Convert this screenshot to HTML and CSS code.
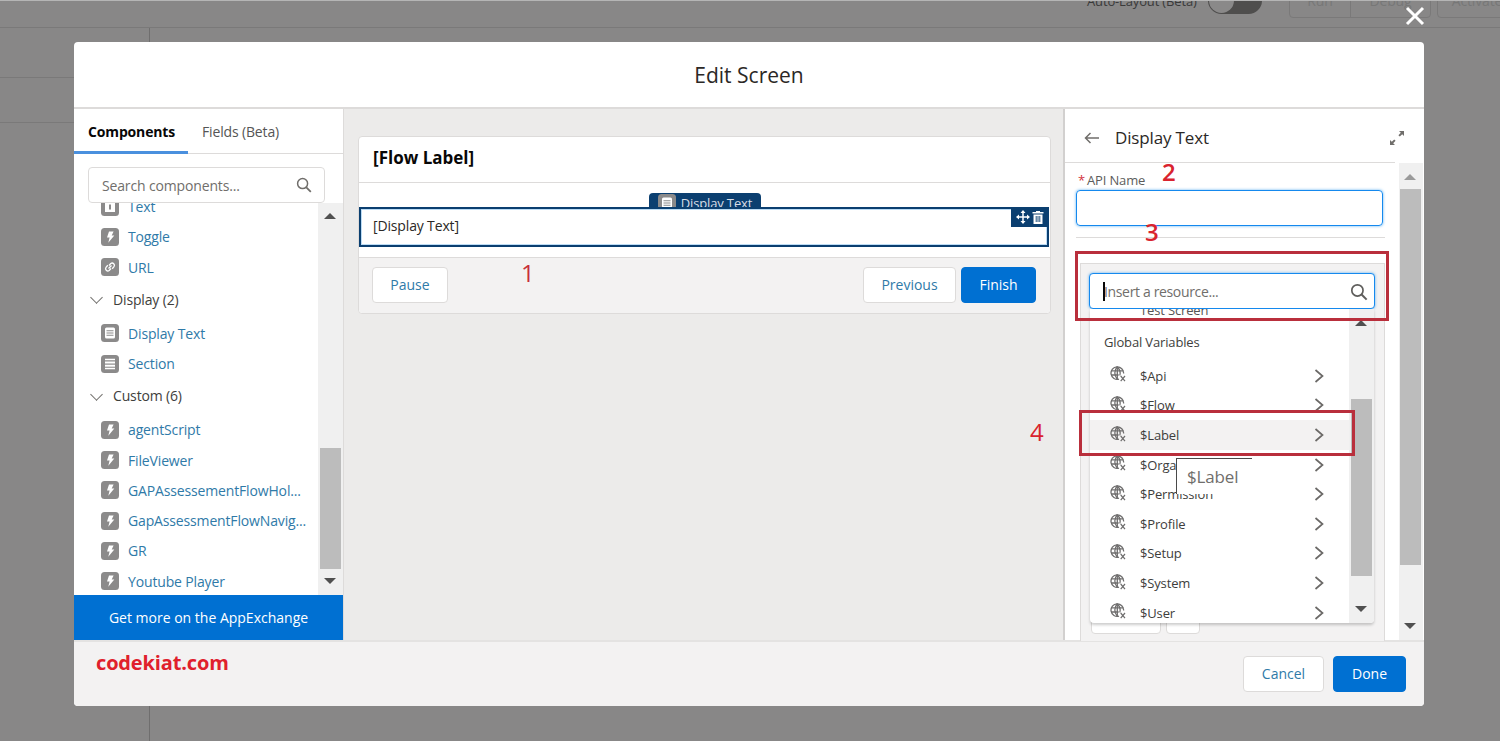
FILE: index.html
```html
<!DOCTYPE html>
<html lang="en">
<head>
  <meta charset="UTF-8">
  <title>Edit Screen</title>
  <link rel="stylesheet" href="styles.css">
</head>
<body>

  <svg class="defs" width="0" height="0">
    <symbol id="bolt" viewBox="0 0 18 18">
      <rect width="18" height="18" rx="3.5" fill="#8b8a8a"/>
      <path d="M8 3.5h4.6l-1.9 3.9h2.6l-6 7.4 1.3-5.3H6z" fill="#fff"/>
    </symbol>
    <symbol id="text" viewBox="0 0 18 18">
      <rect width="18" height="18" rx="3.5" fill="#8b8a8a"/>
      <rect x="4" y="4" width="10" height="10" fill="#fff"/>
      <rect x="8" y="6.5" width="2" height="5" fill="#8b8a8a"/>
    </symbol>
    <symbol id="link" viewBox="0 0 18 18">
      <rect width="18" height="18" rx="3.5" fill="#8b8a8a"/>
      <path d="M8 7.500l1.800-2a2.300 2.300 0 0 1 3.200 3.200l-1.800 2M10 10.500l-1.800 2A2.300 2.300 0 0 1 5 9.300l1.800-2M7.500 10.500l3-3" fill="none" stroke="#fff" stroke-width="1.300"/>
    </symbol>
    <symbol id="lines" viewBox="0 0 18 18">
      <rect width="18" height="18" rx="3.500" fill="#8b8a8a"/>
      <rect x="4" y="3.500" width="10" height="11" rx="1.500" fill="#fff"/>
      <path d="M5.500 6.800h7M5.500 9h7M5.500 11.200h7" stroke="#8b8a8a" stroke-width="1.100"/>
    </symbol>
    <symbol id="section" viewBox="0 0 18 18">
      <rect width="18" height="18" rx="3.500" fill="#8b8a8a"/>
      <path d="M4 4.500h10M4 13.500h10" stroke="#fff" stroke-width="1.300"/>
      <rect x="4" y="6.500" width="10" height="2" fill="#fff"/>
      <rect x="4" y="9.700" width="10" height="2" fill="#fff"/>
    </symbol>
    <symbol id="globe" viewBox="0 0 16 16">
      <g fill="none" stroke="#6f6e6e" stroke-width="1.300">
        <path d="M9 13.200A6.300 6.300 0 1 1 13.600 7.500"/>
        <path d="M7.300 .8C4 4.500 4 9.500 7.300 13.200M7.300 .8c3.300 3.700 3.300 6.500 2.500 8.700"/>
        <path d="M1.200 4.800h12.200M1.200 9h7.500M7.300 .8v12.400"/>
      </g>
      <path d="M10.700 10l4.300 5.200M15 10l-4.300 5.200" fill="none" stroke="#6f6e6e" stroke-width="1.200"/>
    </symbol>
    <symbol id="mag" viewBox="0 0 16 16">
      <circle cx="6.600" cy="6.600" r="5" fill="none" stroke="currentColor" stroke-width="1.500"/>
      <path d="M10.300 10.300l4.500 4.500" stroke="currentColor" stroke-width="1.800"/>
    </symbol>
    <symbol id="chev" viewBox="0 0 10 14">
      <path d="M1.500 1l7 6-7 6" fill="none" stroke="#6b6967" stroke-width="1.700"/>
    </symbol>
  </svg>

  <!-- page behind the modal -->
  <div class="backdrop">
    <div class="app-top">
      <span class="auto-label">Auto-Layout (Beta)</span>
      <span class="toggle"></span>
      <span class="bg-btn bg-run">Run</span>
      <span class="bg-btn bg-debug">Debug</span>
      <span class="bg-btn bg-activate">Activate</span>
    </div>
    <div class="app-side">
      <div class="app-row-a"></div>
      <div class="app-row-b"></div>
    </div>
  </div>

  <svg class="close" width="20" height="20" viewBox="0 0 20 20"><path d="M2 2l16 16M18 2L2 18" stroke="#fff" stroke-width="3"/></svg>

  <div class="modal">
    <header class="modal-head">Edit Screen</header>

    <div class="modal-body">
      <aside class="palette">
        <div class="tabs">
          <div class="tab active">Components</div>
          <div class="tab">Fields (Beta)</div>
        </div>
        <div class="search-wrap">
          <div class="search">
            <span>Search components...</span>
            <svg class="mag"><use href="#mag"/></svg>
          </div>
        </div>
        <div class="palette-scroll">
          <div class="palette-list">
            <div class="comp"><svg class="ico"><use href="#text"/></svg><a>Text</a></div>
            <div class="comp"><svg class="ico"><use href="#bolt"/></svg><a>Toggle</a></div>
            <div class="comp"><svg class="ico"><use href="#link"/></svg><a>URL</a></div>
            <div class="group"><span class="caret"></span>Display (2)</div>
            <div class="comp"><svg class="ico"><use href="#lines"/></svg><a>Display Text</a></div>
            <div class="comp"><svg class="ico"><use href="#section"/></svg><a>Section</a></div>
            <div class="group"><span class="caret"></span>Custom (6)</div>
            <div class="comp"><svg class="ico"><use href="#bolt"/></svg><a>agentScript</a></div>
            <div class="comp"><svg class="ico"><use href="#bolt"/></svg><a>FileViewer</a></div>
            <div class="comp"><svg class="ico"><use href="#bolt"/></svg><a>GAPAssessementFlowHol...</a></div>
            <div class="comp"><svg class="ico"><use href="#bolt"/></svg><a>GapAssessmentFlowNavig...</a></div>
            <div class="comp"><svg class="ico"><use href="#bolt"/></svg><a>GR</a></div>
            <div class="comp"><svg class="ico"><use href="#bolt"/></svg><a>Youtube Player</a></div>
          </div>
          <div class="scrollbar palette-bar">
            <span class="arrow up"></span>
            <span class="thumb"></span>
            <span class="arrow down"></span>
          </div>
        </div>
        <div class="appex">Get more on the AppExchange</div>
      </aside>

      <main class="canvas">
        <div class="screen">
          <div class="screen-title">[Flow Label]</div>
          <div class="screen-body">
            <div class="tag-clip">
              <div class="tag"><svg class="tag-ico"><use href="#lines"/></svg>Display Text</div>
            </div>
            <div class="selected">
              [Display Text]
              <div class="sel-tools">
                <svg width="14" height="14" viewBox="0 0 14 14"><path d="M7 1v12M1 7h12" stroke="#fff" stroke-width="1.500"/><path d="M7 0l2.500 3h-5zM7 14l2.500-3h-5zM0 7l3-2.500v5zM14 7l-3-2.500v5z" fill="#fff"/></svg>
                <svg width="12" height="14" viewBox="0 0 12 14"><path d="M4 1h4v1h3.500v1.500H.5V2H4zM1.500 4.500h9V14h-9z" fill="#fff"/><path d="M4.200 6v6M6 6v6M7.800 6v6" stroke="#0b3f70" stroke-width=".9"/></svg>
              </div>
            </div>
          </div>
          <div class="screen-foot">
            <button class="btn">Pause</button>
            <div class="foot-right">
              <button class="btn btn-prev">Previous</button>
              <button class="btn btn-blue btn-finish">Finish</button>
            </div>
          </div>
        </div>
      </main>

      <aside class="props">
        <div class="props-head">
          <svg class="back" width="16" height="12" viewBox="0 0 16 12"><path d="M15 6H2M6.500 1L1.500 6l5 5" fill="none" stroke="#706e6b" stroke-width="1.500"/></svg>
          <span class="props-title">Display Text</span>
          <svg class="expand" width="16" height="16" viewBox="0 0 16 16"><path d="M10 1h5v5l-1.800-1.800-2.400 2.400-1.400-1.400 2.400-2.400zM6 15H1v-5l1.800 1.800 2.400-2.400 1.400 1.400-2.400 2.400z" fill="#706e6b"/></svg>
        </div>
        <div class="props-scroll">
          <div class="props-main">
            <label class="api-label"><span class="req">*</span>API Name</label>
            <div class="api-input"></div>
            <div class="divider"></div>
            <div class="editor">
              <div class="resource">
                <span class="cursor"></span>
                <span>Insert a resource...</span>
                <svg class="mag mag-dark"><use href="#mag"/></svg>
              </div>
              <div class="editor-tools">
                <span class="tool-a"></span>
                <span class="tool-b"></span>
              </div>
            </div>
          </div>
          <div class="scrollbar props-bar">
            <span class="arrow up"></span>
            <span class="thumb"></span>
            <span class="arrow down"></span>
          </div>
        </div>
      </aside>
    </div>

    <footer class="modal-foot">
      <span class="brand">codekiat.com</span>
      <div class="foot-right">
        <button class="btn btn-cancel">Cancel</button>
        <button class="btn btn-blue btn-done">Done</button>
      </div>
    </footer>
  </div>

  <!-- resource dropdown, floats over the panel -->
  <div class="dropdown">
    <div class="dd-list">
      <div class="dd-cut">Test Screen</div>
      <div class="dd-head">Global Variables</div>
      <div class="dd-row"><svg class="globe"><use href="#globe"/></svg><span>$Api</span><svg class="chev"><use href="#chev"/></svg></div>
      <div class="dd-row"><svg class="globe"><use href="#globe"/></svg><span>$Flow</span><svg class="chev"><use href="#chev"/></svg></div>
      <div class="dd-row hover"><svg class="globe"><use href="#globe"/></svg><span>$Label</span><svg class="chev"><use href="#chev"/></svg></div>
      <div class="dd-row"><svg class="globe"><use href="#globe"/></svg><span>$Organization</span><svg class="chev"><use href="#chev"/></svg></div>
      <div class="dd-row"><svg class="globe"><use href="#globe"/></svg><span>$Permission</span><svg class="chev"><use href="#chev"/></svg></div>
      <div class="dd-row"><svg class="globe"><use href="#globe"/></svg><span>$Profile</span><svg class="chev"><use href="#chev"/></svg></div>
      <div class="dd-row"><svg class="globe"><use href="#globe"/></svg><span>$Setup</span><svg class="chev"><use href="#chev"/></svg></div>
      <div class="dd-row"><svg class="globe"><use href="#globe"/></svg><span>$System</span><svg class="chev"><use href="#chev"/></svg></div>
      <div class="dd-row"><svg class="globe"><use href="#globe"/></svg><span>$User</span><svg class="chev"><use href="#chev"/></svg></div>
    </div>
    <div class="scrollbar dd-bar">
      <span class="arrow up"></span>
      <span class="thumb"></span>
      <span class="arrow down"></span>
    </div>
  </div>

  <div class="tooltip">$Label</div>

  <!-- red markup on top of the screenshot -->
  <span class="mark mark-1">1</span>
  <span class="mark mark-2">2</span>
  <span class="mark mark-3">3</span>
  <span class="mark mark-4">4</span>
  <div class="box box-3"></div>
  <div class="box box-4"></div>

</body>
</html>
```

FILE: styles.css
```css
* { margin: 0; padding: 0; box-sizing: border-box; }
body {
  position: relative;
  height: 741px;
  overflow: hidden;
  font-family: 'Open Sans', 'Noto Sans', sans-serif;
  font-size: 14px;
  letter-spacing: -0.15px;
  color: #3e3e3c;
  background: #888787;
}
.defs { position: absolute; }

/* page behind */
.backdrop {
  position: absolute;
  inset: 0;
  border-top: 1px solid #b5b5b5;
}
.app-top {
  position: relative;
  height: 27px;
  border-bottom: 1px solid #7a7979;
  overflow: hidden;
}
.auto-label {
  position: absolute;
  left: 1087px;
  top: -9px;
  color: #3a3a3a;
  font-size: 13px;
}
.toggle {
  position: absolute;
  left: 1208px;
  top: -14px;
  width: 54px;
  height: 27px;
  border-radius: 14px;
  background: #4f4e4d;
}
.toggle::before {
  content: "";
  position: absolute;
  left: 1px;
  top: 1px;
  width: 25px;
  height: 25px;
  border-radius: 50%;
  background: #8a8989;
}
.bg-btn {
  position: absolute;
  top: -18px;
  height: 35px;
  border: 1px solid #7a7979;
  border-radius: 4px;
  line-height: 33px;
  text-align: center;
  color: #777;
}
.bg-run { left: 1289px; width: 62px; border-radius: 4px 0 0 4px; }
.bg-debug { left: 1350px; width: 81px; border-radius: 0 4px 4px 0; }
.bg-activate { left: 1437px; width: 80px; }
.app-side {
  width: 150px;
  height: 713px;
  border-right: 1px solid #6f6e6e;
}
.app-row-a { height: 50px; border-bottom: 1px solid #7a7979; }
.app-row-b { height: 45px; border-bottom: 1px solid #7a7979; }

.close {
  position: absolute;
  left: 1405px;
  top: 6px;
}

/* modal */
.modal {
  position: absolute;
  left: 74px;
  top: 42px;
  width: 1350px;
  height: 664px;
  display: flex;
  flex-direction: column;
  background: #fff;
  border-radius: 4px;
  overflow: hidden;
}
.modal-head {
  height: 67px;
  flex: none;
  border-bottom: 2px solid #dddbda;
  padding-top: 18px;
  text-align: center;
  font-size: 21px;
  line-height: 30px;
  letter-spacing: 0;
  color: #2b2826;
}
.modal-body {
  flex: 1;
  min-height: 0;
  display: flex;
}
.modal-foot {
  height: 66px;
  flex: none;
  display: flex;
  justify-content: space-between;
  background: #f3f2f2;
  border-top: 2px solid #e4e3e2;
  padding: 14px 18px 0 22px;
}
.brand {
  color: #e0202c;
  font-size: 20px;
  font-weight: 700;
  line-height: 20px;
  margin-top: -3px;
}

/* left palette */
.palette {
  width: 270px;
  flex: none;
  display: flex;
  flex-direction: column;
  border-right: 1px solid #dddbda;
}
.tabs {
  height: 45px;
  flex: none;
  display: flex;
  border-bottom: 1px solid #dddbda;
}
.tab {
  padding: 13px 14px 0;
  line-height: 20px;
  color: #555;
}
.tab.active {
  width: 114px;
  height: 45px;
  border-bottom: 3px solid #4a90de;
  color: #080707;
  font-weight: 700;
}
.search-wrap {
  height: 49px;
  flex: none;
  padding: 13px 0 0 14px;
}
.search {
  width: 237px;
  height: 36px;
  display: flex;
  align-items: center;
  justify-content: space-between;
  padding: 0 12px 0 13px;
  border: 1px solid #dddbda;
  border-radius: 4px;
  color: #706e6b;
}
.mag {
  width: 16px;
  height: 16px;
  color: #706e6b;
}
.palette-scroll {
  flex: 1;
  min-height: 0;
  display: flex;
  overflow: hidden;
}
.palette-list {
  flex: 1;
  margin-top: -11.500px;
}
.comp {
  height: 30.250px;
  display: flex;
  align-items: center;
  padding-left: 27px;
}
.comp a { color: #2f7aa8; margin-left: 9px; white-space: nowrap; }
.ico { width: 18px; height: 18px; flex: none; }
.group {
  height: 36px;
  display: flex;
  align-items: center;
  padding: 0 0 2px 39px;
  color: #3e3e3c;
  position: relative;
}
.caret {
  position: absolute;
  left: 18px;
  top: 11px;
  width: 9px;
  height: 9px;
  border-right: 1.300px solid #706e6b;
  border-bottom: 1.300px solid #706e6b;
  transform: rotate(45deg);
}
.appex {
  height: 45px;
  flex: none;
  background: #0070d2;
  color: #fff;
  letter-spacing: 0;
  line-height: 45px;
  text-align: center;
}

/* scrollbars */
.scrollbar {
  position: relative;
  flex: none;
  background: #f0f0f0;
}
.thumb {
  position: absolute;
  background: #bcbcbc;
}
.arrow {
  position: absolute;
  width: 0;
  height: 0;
  border-left: 6px solid transparent;
  border-right: 6px solid transparent;
}
.arrow.up { border-bottom: 6px solid #505050; }
.arrow.down { border-top: 6px solid #505050; }
.palette-bar { width: 25px; }
.palette-bar .thumb { left: 2px; width: 21px; top: 245px; height: 121px; }
.palette-bar .arrow { left: 6px; }
.palette-bar .up { top: 10px; }
.palette-bar .down { top: 375px; }

/* canvas */
.canvas {
  width: 719px;
  flex: none;
  background: #ecebea;
  padding: 27px 12px 0 14px;
}
.screen {
  height: 178px;
  background: #fff;
  border: 1px solid #dddbda;
  border-radius: 4px;
  display: flex;
  flex-direction: column;
}
.screen-title {
  height: 46px;
  flex: none;
  border-bottom: 1px solid #dddbda;
  padding: 10px 14px 0;
  font-size: 17px;
  font-weight: 700;
  line-height: 22px;
  letter-spacing: 0;
  color: #080707;
}
.screen-body {
  flex: 1;
  position: relative;
  padding-top: 24px;
}
.tag-clip {
  position: absolute;
  left: 290px;
  top: 10px;
  width: 112px;
  height: 15px;
  overflow: hidden;
  border-radius: 4px 4px 0 0;
}
.tag {
  height: 20px;
  display: flex;
  align-items: center;
  justify-content: center;
  gap: 5px;
  background: #0b3f70;
  color: #d8dde6;
  font-size: 13px;
}
.tag-ico { width: 18px; height: 18px; }
.selected {
  position: relative;
  height: 40px;
  margin-right: 1px;
  border: 2px solid #0b3f70;
  box-shadow: inset 0 0 0 1px #bcdcf5;
  padding-left: 12px;
  line-height: 34px;
  color: #2b2826;
}
.sel-tools {
  position: absolute;
  right: -2px;
  top: -2px;
  width: 38px;
  height: 20px;
  display: flex;
  justify-content: center;
  gap: 2px;
  align-items: center;
  background: #0b3f70;
}
.screen-foot {
  height: 56px;
  flex: none;
  display: flex;
  justify-content: space-between;
  align-items: flex-start;
  padding: 9px 14px 0 13px;
  background: #f3f2f2;
  border-top: 1px solid #dddbda;
  border-radius: 0 0 4px 4px;
}
.foot-right { display: flex; gap: 5px; }
.btn {
  height: 36px;
  width: 76px;
  padding-bottom: 2px;
  background: #fff;
  border: 1px solid #dddbda;
  border-radius: 4px;
  color: #2f7aa8;
  font-family: inherit;
  font-size: 14px;
}
.btn-prev { width: 93px; }
.btn-finish { width: 75px; }
.btn-blue {
  background: #0070d2;
  border-color: #0070d2;
  color: #fff;
}
.modal-foot .foot-right { gap: 9px; }
.btn-cancel { width: 81px; }
.btn-done { width: 73px; }

/* right panel */
.props {
  flex: 1;
  min-width: 0;
  display: flex;
  flex-direction: column;
  border-left: 2px solid #d2d0cf;
}
.props-head {
  height: 54px;
  flex: none;
  display: flex;
  align-items: center;
  padding: 3px 19px 0 19px;
  position: relative;
}
.props-head::after {
  content: "";
  position: absolute;
  left: 0;
  bottom: 0;
  width: 330px;
  border-bottom: 1px solid #dddbda;
}
.back { flex: none; }
.props-title {
  flex: 1;
  margin-left: 15px;
  font-size: 17px;
  color: #2b2826;
}
.props-scroll {
  flex: 1;
  min-height: 0;
  display: flex;
}
.props-main {
  flex: 1;
  min-width: 0;
  padding: 0 0 0 11px;
}
.api-label {
  display: block;
  height: 27px;
  padding: 8px 0 0 2px;
  font-size: 13px;
  line-height: 18px;
  color: #5c5c5c;
}
.req { color: #d3323c; margin-right: 2px; }
.api-input {
  width: 307px;
  height: 36px;
  border: 1px solid #1589ee;
  border-radius: 4px;
  box-shadow: 0 0 3px #5fb0f0;
}
.divider {
  width: 309px;
  margin-top: 11px;
  border-top: 1px solid #dddbda;
}
.editor {
  position: relative;
  width: 305px;
  height: 378px;
  margin: 25px 0 0 4px;
  background: #f3f2f2;
  border: 1px solid #dddbda;
  border-bottom: 0;
  padding: 9px 8px 0;
}
.resource {
  width: 286px;
  height: 36px;
  display: flex;
  align-items: center;
  background: #fff;
  border: 1px solid #1589ee;
  border-radius: 4px;
  box-shadow: 0 0 3px #5fb0f0;
  padding: 0 0 0 13px;
  letter-spacing: -0.35px;
  color: #706e6b;
  position: relative;
}
.cursor {
  width: 2px;
  height: 19px;
  flex: none;
  background: #080707;
  margin-right: -1px;
}
.mag-dark {
  position: absolute;
  right: 6px;
  top: 9px;
  width: 18px;
  height: 18px;
  color: #5f5e5c;
}
.editor-tools {
  position: absolute;
  left: 10px;
  top: 350px;
  display: flex;
  gap: 5px;
}
.editor-tools span {
  height: 20px;
  background: #fff;
  border: 1px solid #dddbda;
  border-radius: 4px;
}
.tool-a {
  width: 70px;
  background: linear-gradient(#dddbda, #dddbda) 34px 0 / 1px 100% no-repeat #fff;
}
.tool-b { width: 34px; }
.props-bar { width: 24px; margin-right: 1px; }
.props-bar .thumb { left: 1px; width: 21px; top: 26px; height: 376px; }
.props-bar .arrow { left: 5px; }
.props-bar .up { top: 11px; border-bottom-color: #9a9a9a; }
.props-bar .down { top: 460px; }

/* dropdown */
.dropdown {
  position: absolute;
  left: 1090px;
  top: 309px;
  width: 284px;
  height: 314px;
  display: flex;
  background: #fff;
  border-radius: 0 0 4px 4px;
  box-shadow: 0 2px 3px rgba(0, 0, 0, .2);
  overflow: hidden;
}
.dd-list {
  flex: 1;
  min-width: 0;
}
.dd-cut {
  height: 18px;
  margin-top: -9px;
  padding-left: 50px;
  line-height: 20px;
  font-size: 13px;
  color: #555;
}
.dd-head {
  height: 43px;
  padding: 14px 0 0 14px;
  line-height: 20px;
  font-size: 13px;
  color: #3e3e3c;
}
.dd-row {
  height: 29.620px;
  display: flex;
  align-items: center;
  padding-left: 20px;
  font-size: 13px;
  color: #3e3e3c;
}
.dd-row span { flex: 1; margin-left: 14px; }
.dd-row.hover { background: #f3f2f2; }
.globe { width: 16px; height: 16px; flex: none; margin-top: -3px; }
.chev { width: 10px; height: 14px; flex: none; margin-right: 25px; }
.dd-bar { width: 25px; }
.dd-bar .thumb { left: 2px; width: 21px; top: 90px; height: 177px; }
.dd-bar .arrow { left: 6px; }
.dd-bar .up { top: 11px; }
.dd-bar .down { top: 297px; }

.tooltip {
  position: absolute;
  left: 1176px;
  top: 458px;
  width: 76px;
  height: 36px;
  background: #fff;
  border-top: 1px solid #4a4a4a;
  border-left: 1px solid #4a4a4a;
  padding-left: 10px;
  font-size: 17px;
  line-height: 36px;
  color: #706e6b;
}

/* red markup */
.mark {
  position: absolute;
  color: #d9232e;
  font-size: 24px;
  line-height: 26px;
}
.mark-1 { left: 521px; top: 260px; color: #c8303a; }
.mark-2 { left: 1162px; top: 159px; font-weight: 600; }
.mark-3 { left: 1145px; top: 219px; font-weight: 600; }
.mark-4 { left: 1030px; top: 419px; }
.box {
  position: absolute;
  border: 3px solid #b92f3c;
}
.box-3 { left: 1075px; top: 251px; width: 314px; height: 70px; }
.box-4 { left: 1079px; top: 410px; width: 276px; height: 46px; }
```
